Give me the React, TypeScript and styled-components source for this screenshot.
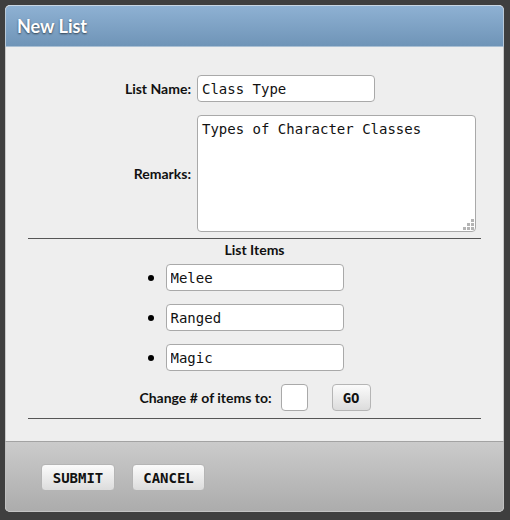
import React from "react";
import styled, { createGlobalStyle } from "styled-components";

const Global = createGlobalStyle`
  html, body { margin: 0; padding: 0; background: #3f3f3f; }
  body { font-family: Lato, "Open Sans", sans-serif; }
`;

const Dialog = styled.div`
  margin: 5px 0 0 5px;
  width: 499px;
  height: 507px;
  display: flex;
  flex-direction: column;
  border-radius: 5px;
  overflow: hidden;
  background: #eeeeee;
`;

const Header = styled.div`
  height: 42px;
  box-sizing: border-box;
  display: flex;
  align-items: center;
  padding: 0 11px;
  background: linear-gradient(#8eb1d3, #6f94b7);
  border-top: 1px solid #c9d6e3;
  border-left: 1px solid #b9c9d8;
  border-right: 1px solid #b9c9d8;
  border-bottom: 1px solid #a9bfd3;
  border-radius: 5px 5px 0 0;
`;

const Title = styled.h1`
  margin: 0;
  font-family: Lato, sans-serif;
  font-weight: 700;
  font-size: 18px;
  color: #ffffff;
  text-shadow: 0 1px 2px rgba(0, 0, 0, 0.6);
`;

const Body = styled.div`
  flex: 1;
  padding: 28px 22px 21px;
  background: #eeeeee;
  border-left: 1px solid #c8c8c8;
  border-right: 1px solid #c8c8c8;
  display: flex;
  flex-direction: column;
`;

const FormGrid = styled.div`
  display: grid;
  grid-template-columns: 163px 279px;
  column-gap: 6px;
  row-gap: 13px;
  align-items: center;
`;

const Label = styled.label`
  text-align: right;
  font-family: Lato, sans-serif;
  font-weight: 700;
  font-size: 14px;
  color: #111;
`;

const TextInput = styled.input<{ $w?: number }>`
  box-sizing: border-box;
  width: ${(p) => p.$w ?? 178}px;
  height: 27px;
  padding: 0 4px;
  border: 1px solid #a9a9a9;
  border-radius: 4px;
  background: #fff;
  font-family: "DejaVu Sans Mono", monospace;
  font-size: 14px;
  color: #111;
  outline: none;
`;

const AreaWrap = styled.div`
  position: relative;
  width: 279px;
  height: 117px;
  &::after {
    content: "";
    position: absolute;
    right: 2px;
    bottom: 2px;
    width: 11px;
    height: 11px;
    pointer-events: none;
    background:
      linear-gradient(#b4b4b4, #b4b4b4) 8px 0 / 3px 3px no-repeat,
      linear-gradient(#b4b4b4, #b4b4b4) 4px 4px / 3px 3px no-repeat,
      linear-gradient(#b4b4b4, #b4b4b4) 8px 4px / 3px 3px no-repeat,
      linear-gradient(#b4b4b4, #b4b4b4) 0 8px / 3px 3px no-repeat,
      linear-gradient(#b4b4b4, #b4b4b4) 4px 8px / 3px 3px no-repeat,
      linear-gradient(#b4b4b4, #b4b4b4) 8px 8px / 3px 3px no-repeat;
  }
`;

const TextArea = styled.textarea`
  box-sizing: border-box;
  width: 279px;
  height: 117px;
  padding: 4px;
  margin: 0;
  display: block;
  border: 1px solid #a9a9a9;
  border-radius: 4px;
  background: #fff;
  font-family: "DejaVu Sans Mono", monospace;
  font-size: 14px;
  line-height: 18px;
  color: #111;
  resize: none;
  outline: none;
`;

const Rule = styled.hr`
  margin: 0;
  border: none;
  height: 1px;
  background: #555;
`;

const RuleTop = styled(Rule)`
  margin-top: 6px;
`;

const RuleBottom = styled(Rule)`
  margin-top: 7px;
`;

const SectionTitle = styled.div`
  text-align: center;
  font-family: Lato, sans-serif;
  font-weight: 700;
  font-size: 14px;
  color: #111;
  line-height: 18px;
  margin: 2px 0 5px;
`;

const ItemList = styled.ul`
  list-style: none;
  margin: 0;
  padding: 0;
  display: flex;
  flex-direction: column;
  align-items: center;
  gap: 13px;
`;

const Item = styled.li`
  position: relative;
  display: flex;
  &::before {
    content: "";
    position: absolute;
    left: -18px;
    top: 11px;
    width: 6px;
    height: 6px;
    border-radius: 50%;
    background: #000;
  }
`;

const ChangeRow = styled.div`
  margin-top: 13px;
  display: flex;
  align-items: center;
  justify-content: center;
  padding-left: 1px;
`;

const ChangeLabel = styled.span`
  font-family: Lato, sans-serif;
  font-weight: 700;
  font-size: 14px;
  color: #111;
  margin-right: 9px;
`;

const Button = styled.button<{ $w: number }>`
  box-sizing: border-box;
  width: ${(p) => p.$w}px;
  height: 27px;
  padding: 0;
  border: 1px solid #b5b5b5;
  border-radius: 4px;
  background: linear-gradient(#fbfbfb, #dcdcdc);
  font-family: "DejaVu Sans Mono", monospace;
  font-weight: 700;
  font-size: 14px;
  color: #111;
  cursor: pointer;
`;

const GoButton = styled(Button)`
  margin-left: 24px;
`;

const Footer = styled.div`
  height: 71px;
  box-sizing: border-box;
  display: flex;
  align-items: flex-start;
  gap: 17px;
  padding: 22px 0 0 35px;
  background: linear-gradient(#cbcbcb, #acacac);
  border-top: 1px solid #a3a3a3;
  border-left: 1px solid #c0c0c0;
  border-right: 1px solid #c0c0c0;
  border-bottom: 1px solid #c3c3c3;
  border-radius: 0 0 5px 5px;
`;

export default function App() {
  return (
    <>
      <Global />
      <Dialog>
        <Header>
          <Title>New List</Title>
        </Header>
        <Body>
          <FormGrid>
            <Label>List Name:</Label>
            <TextInput defaultValue="Class Type" />
            <Label>Remarks:</Label>
            <AreaWrap>
              <TextArea defaultValue="Types of Character Classes" />
            </AreaWrap>
          </FormGrid>
          <RuleTop />
          <SectionTitle>List Items</SectionTitle>
          <ItemList>
            <Item><TextInput defaultValue="Melee" /></Item>
            <Item><TextInput defaultValue="Ranged" /></Item>
            <Item><TextInput defaultValue="Magic" /></Item>
          </ItemList>
          <ChangeRow>
            <ChangeLabel>Change # of items to:</ChangeLabel>
            <TextInput $w={27} />
            <GoButton $w={39}>GO</GoButton>
          </ChangeRow>
          <RuleBottom />
        </Body>
        <Footer>
          <Button $w={74}>SUBMIT</Button>
          <Button $w={73}>CANCEL</Button>
        </Footer>
      </Dialog>
    </>
  );
}
